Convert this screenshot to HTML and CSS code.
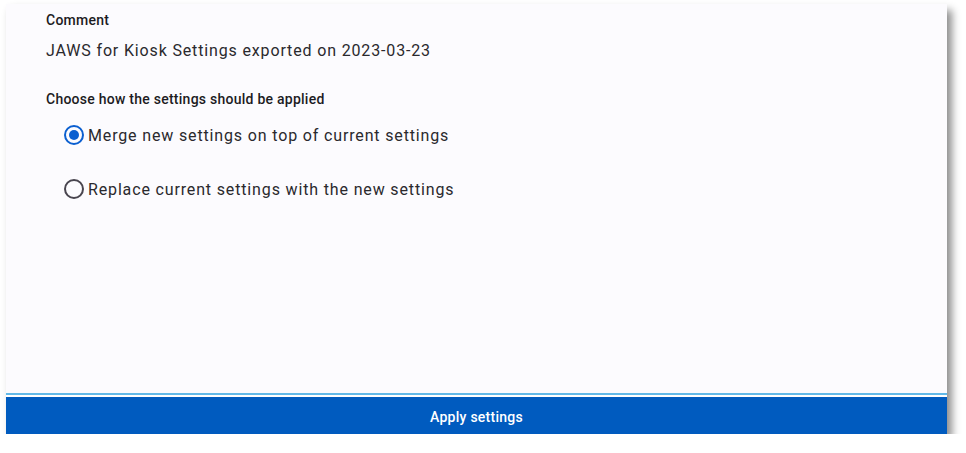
FILE: index.html
```html
<!DOCTYPE html>
<html lang="en">
<head>
<meta charset="utf-8">
<title>Apply settings</title>
<link rel="stylesheet" href="styles.css">
</head>
<body>
<div class="window">
  <main class="content">
    <div class="label comment-label">Comment</div>
    <div class="value">JAWS for Kiosk Settings exported on 2023-03-23</div>
    <div class="label choose-label">Choose how the settings should be applied</div>
    <div class="options">
      <label class="option">
        <span class="radio checked"></span>
        <span class="option-text">Merge new settings on top of current settings</span>
      </label>
      <label class="option">
        <span class="radio"></span>
        <span class="option-text">Replace current settings with the new settings</span>
      </label>
    </div>
  </main>
  <div class="divider"></div>
  <button class="apply">Apply settings</button>
</div>
</body>
</html>
```
FILE: styles.css
```css
html, body {
  margin: 0;
  padding: 0;
  background: #ffffff;
}
body {
  font-family: Roboto, "Noto Sans", "Liberation Sans", sans-serif;
  color: #1c1b1f;
}
.window {
  margin: 4px 0 0 6px;
  width: 941px;
  height: 430px;
  background: #fcfbfe;
  display: flex;
  flex-direction: column;
  box-shadow: 5px 6px 8px rgba(0, 0, 0, 0.45);
}
.content {
  flex: 1;
  padding: 7px 0 0 40px;
  display: flex;
  flex-direction: column;
}
.label {
  font-size: 14px;
  font-weight: 500;
  letter-spacing: 0.25px;
  line-height: 18px;
  color: #1c1b1f;
}
.value {
  font-size: 16px;
  letter-spacing: 0.85px;
  line-height: 22px;
  margin-top: 11px;
  color: #2a292d;
}
.choose-label {
  margin-top: 28px;
}
.options {
  display: flex;
  flex-direction: column;
  gap: 32px;
  margin-top: 16px;
  padding-left: 18px;
}
.option {
  display: flex;
  align-items: center;
  gap: 4px;
  height: 22px;
}
.radio {
  width: 16px;
  height: 16px;
  border: 2px solid #49454f;
  border-radius: 50%;
  box-sizing: content-box;
  display: flex;
  align-items: center;
  justify-content: center;
}
.radio.checked {
  border-color: #0b5fd0;
}
.radio.checked::after {
  content: "";
  width: 10px;
  height: 10px;
  border-radius: 50%;
  background: #0b5fd0;
}
.option-text {
  font-size: 16px;
  letter-spacing: 0.85px;
  color: #2a292d;
}
.divider {
  height: 2px;
  background: #62b9e8;
  border-bottom: 2px solid #ffffff;
}
.apply {
  height: 37px;
  border: none;
  background: #005bbf;
  color: #ffffff;
  font-family: Roboto, "Noto Sans", "Liberation Sans", sans-serif;
  font-size: 14px;
  font-weight: 500;
  letter-spacing: 0.25px;
  padding: 3px 0 0;
  cursor: pointer;
}
```
